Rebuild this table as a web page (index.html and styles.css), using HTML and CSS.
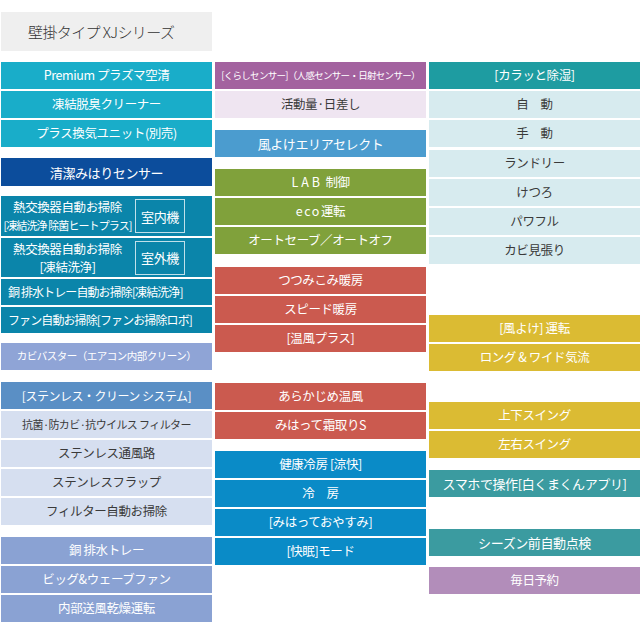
FILE: index.html
```html
<!DOCTYPE html>
<html lang="ja">
<head>
<meta charset="utf-8">
<title>壁掛タイプ XJシリーズ</title>
<link rel="stylesheet" href="styles.css">
</head>
<body>
<div class="page">
  <div class="col col-left">
    <div class="title">壁掛タイプ XJシリーズ</div>
    <div class="bar cyan mt9">Premium プラズマ空清</div>
    <div class="bar cyan">凍結脱臭クリーナー</div>
    <div class="bar cyan">プラス換気ユニット(別売)</div>
    <div class="bar navy h28 mt9">清潔みはりセンサー</div>
    <div class="bar deep split h40 mt8">
      <div class="split-text">
        <span class="line">熱交換器自動お掃除</span>
        <span class="line tight">[凍結洗浄 除菌ヒートプラス]</span>
      </div>
      <div class="unit">室内機</div>
    </div>
    <div class="bar deep split h39">
      <div class="split-text">
        <span class="line">熱交換器自動お掃除</span>
        <span class="line">[凍結洗浄]</span>
      </div>
      <div class="unit">室外機</div>
    </div>
    <div class="bar deep h26 small-l">銅&nbsp;排水トレー自動お掃除[凍結洗浄]</div>
    <div class="bar deep h26 small-l">ファン自動お掃除[ファンお掃除ロボ]</div>
    <div class="bar periwinkle mt8 tiny">カビバスター（エアコン内部クリーン）</div>
    <div class="bar steel mt10 small">[ステンレス・クリーン&nbsp;システム]</div>
    <div class="bar pale small-dark">抗菌·防カビ·抗ウイルス&nbsp;フィルター</div>
    <div class="bar pale">ステンレス通風路</div>
    <div class="bar pale">ステンレスフラップ</div>
    <div class="bar pale">フィルター自動お掃除</div>
    <div class="bar slate mt10">銅&nbsp;排水トレー</div>
    <div class="bar slate">ビッグ&amp;ウェーブファン</div>
    <div class="bar slate">内部送風乾燥運転</div>
  </div>

  <div class="col col-mid">
    <div class="bar plum micro">[くらしセンサー]（人感センサー・日射センサー）</div>
    <div class="bar lavender">活動量·日差し</div>
    <div class="bar sky mt10">風よけエリアセレクト</div>
    <div class="bar olive mt10"><span class="spaced">LAB</span>&nbsp;制御</div>
    <div class="bar olive"><span class="spaced-s">eco</span>運転</div>
    <div class="bar olive">オートセーブ／オートオフ</div>
    <div class="bar brick mt11">つつみこみ暖房</div>
    <div class="bar brick">スピード暖房</div>
    <div class="bar brick">[温風プラス]</div>
    <div class="bar brick mt29">あらかじめ温風</div>
    <div class="bar brick">みはって霜取りS</div>
    <div class="bar ocean mt10">健康冷房 [涼快]</div>
    <div class="bar ocean">冷　房</div>
    <div class="bar ocean">[みはっておやすみ]</div>
    <div class="bar ocean">[快眠]モード</div>
  </div>

  <div class="col col-right">
    <div class="bar teal">[カラッと除湿]</div>
    <div class="bar mint">自　動</div>
    <div class="bar mint">手　動</div>
    <div class="bar mint mt1">ランドリー</div>
    <div class="bar mint">けつろ</div>
    <div class="bar mint">パワフル</div>
    <div class="bar mint">カビ見張り</div>
    <div class="bar mustard mt49">[風よけ] 運転</div>
    <div class="bar mustard">ロング &amp; ワイド気流</div>
    <div class="bar mustard mt29">上下スイング</div>
    <div class="bar mustard">左右スイング</div>
    <div class="bar teal2 mt10">スマホで操作[白くまくんアプリ]</div>
    <div class="bar teal2 mt30">シーズン前自動点検</div>
    <div class="bar mauve mt9">毎日予約</div>
  </div>
</div>
</body>
</html>
```

FILE: styles.css
```css
* {
  box-sizing: border-box;
}

html, body {
  margin: 0;
  padding: 0;
  background: #ffffff;
}

body {
  font-family: "Noto Sans CJK JP", "Noto Sans", sans-serif;
  color: #ffffff;
}

.page {
  width: 640px;
  height: 640px;
  display: grid;
  grid-template-columns: 211px 211px 211px;
  column-gap: 3px;
  padding-left: 1px;
  align-items: start;
}

.col {
  display: flex;
  flex-direction: column;
  gap: 2px;
}

.col-left {
  padding-top: 12px;
}

.col-mid,
.col-right {
  padding-top: 62px;
}

.title {
  height: 39px;
  background: #efefef;
  color: #333333;
  font-size: 15px;
  font-weight: 300;
  display: flex;
  align-items: center;
  padding-left: 27px;
  letter-spacing: -0.6px;
}

.bar {
  height: 27px;
  display: flex;
  align-items: center;
  justify-content: center;
  font-size: 12.5px;
  letter-spacing: -0.4px;
  white-space: nowrap;
  line-height: 1;
}

.h26 { height: 26px; }
.h28 { height: 28px; }
.h39 { height: 39px; }
.h40 { height: 40px; }

.mt1 { margin-top: 1px; }
.mt8 { margin-top: 8px; }
.mt9 { margin-top: 9px; }
.mt10 { margin-top: 10px; }
.mt11 { margin-top: 11px; }
.mt29 { margin-top: 29px; }
.mt30 { margin-top: 30px; }
.mt49 { margin-top: 49px; }

.tiny {
  font-size: 10.5px;
  letter-spacing: -0.5px;
}

.micro {
  font-size: 9.5px;
  letter-spacing: -0.7px;
}

.small {
  font-size: 12px;
  letter-spacing: -0.5px;
}

.small-l {
  font-size: 12px;
  letter-spacing: -0.9px;
  justify-content: flex-start;
  padding-left: 7px;
}

.small-dark {
  font-size: 11px;
  letter-spacing: -0.6px;
}

/* split rows with a boxed unit label */
.split {
  justify-content: flex-start;
  padding-right: 27px;
}

.split-text {
  width: 133px;
  display: flex;
  flex-direction: column;
  align-items: center;
  font-size: 12.5px;
}

.line {
  display: block;
  line-height: 18px;
  height: 18px;
}

.tight {
  font-size: 11px;
  letter-spacing: -0.9px;
}

.unit {
  width: 50px;
  height: 34px;
  border: 1px solid rgba(255, 255, 255, 0.75);
  display: flex;
  align-items: center;
  justify-content: center;
  font-size: 13px;
  margin-left: 1px;
}

.spaced {
  letter-spacing: 3px;
}

.spaced-s {
  letter-spacing: 1.5px;
}

/* colours */
.cyan { background: #19adc9; }
.navy { background: #0c4d9c; font-size: 13px; }
.deep { background: #0b85aa; }
.periwinkle { background: #8fa4d6; }
.steel { background: #5a8fc5; }
.pale { background: #d6dff0; color: #3a3a3a; }
.slate { background: #8aa2d3; }

.plum { background: #a3629f; }
.lavender { background: #efe5f1; color: #3a3a3a; }
.sky { background: #4b9ccf; font-size: 13px; }
.olive { background: #80a13b; }
.brick { background: #cb5a4f; }
.ocean { background: #0a8bc7; }

.teal { background: #1e9ca1; }
.mint { background: #d7ebef; color: #3a3a3a; }
.mustard { background: #dbbb33; }
.teal2 { background: #3b9ba0; font-size: 13px; }
.mauve { background: #b28dba; }
```
